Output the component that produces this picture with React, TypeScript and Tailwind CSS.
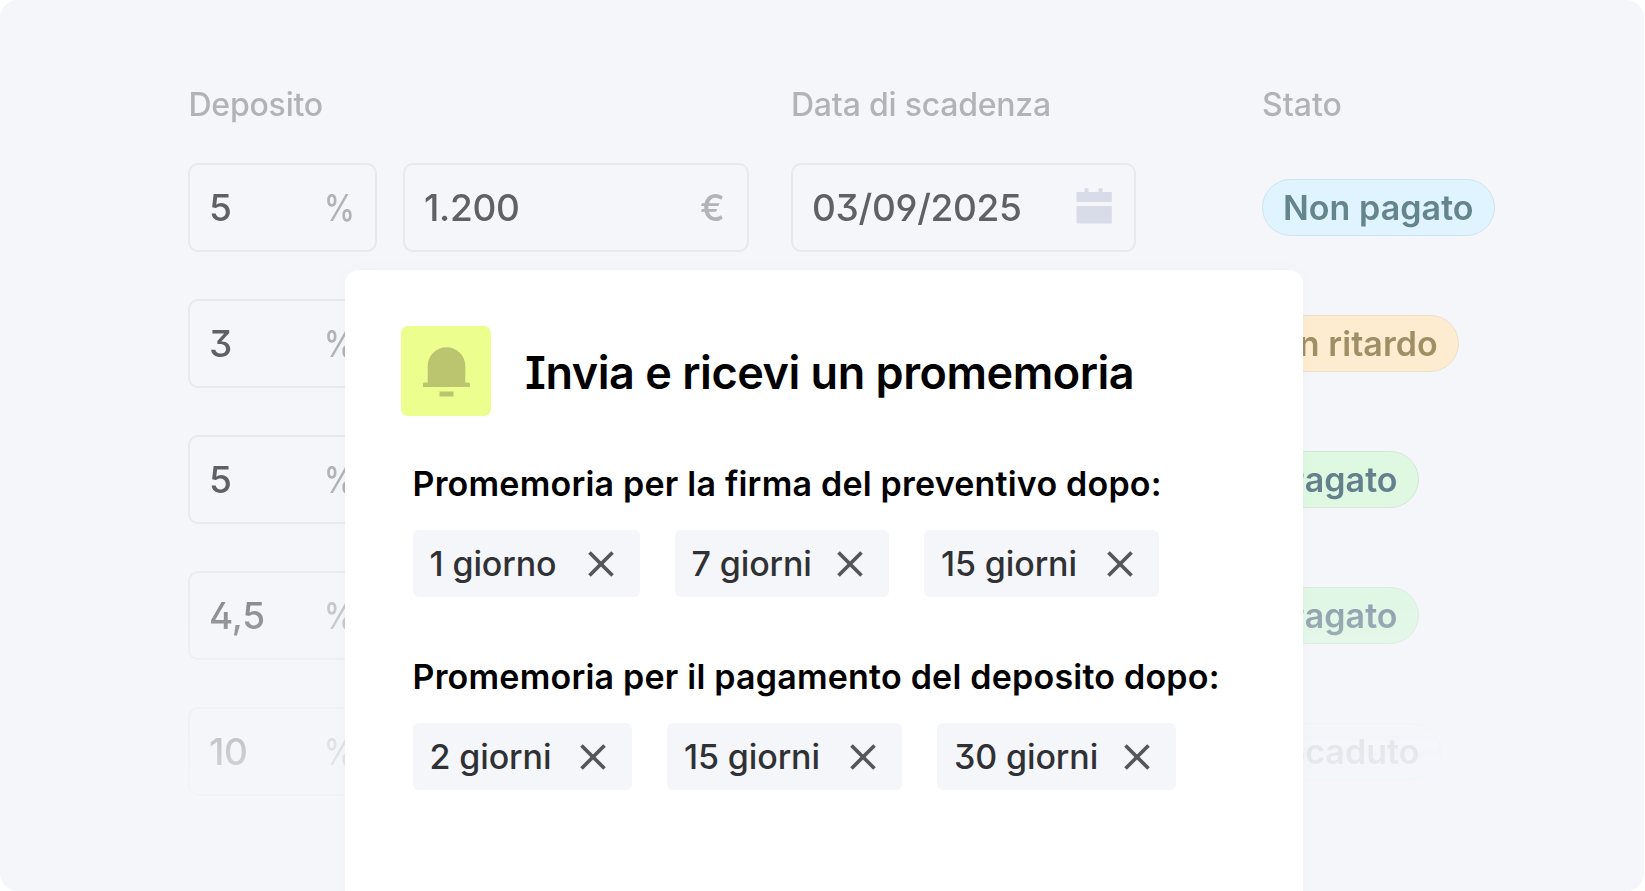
import { X } from "lucide-react";

type Row = {
  percent: string;
  amount?: string;
  due?: string;
  status: string;
  badge: string;
};

const rows: Row[] = [
  { percent: "5", amount: "1.200", due: "03/09/2025", status: "Non pagato", badge: "bg-[#dff4fe] border-[#cfe3ec] text-[#64858e]" },
  { percent: "3", status: "In ritardo", badge: "bg-[#fdecd0] border-[#ecdfca] text-[#a08f64]" },
  { percent: "5", status: "Pagato", badge: "bg-[#dff8e2] border-[#d3e6d8] text-[#64808c]" },
  { percent: "4,5", status: "Pagato", badge: "bg-[#d9f7dd] border-[#d3e6d8] text-[#64808c]" },
  { percent: "10", status: "Scaduto", badge: "bg-[#f4f6fa] border-[#eceef1] text-[#c2c4c9]" },
];

const reminders = [
  {
    label: "Promemoria per la firma del preventivo dopo:",
    chips: [
      { text: "1 giorno", width: "w-[227px]" },
      { text: "7 giorni", width: "w-[214.5px]" },
      { text: "15 giorni", width: "w-[235px]" },
    ],
  },
  {
    label: "Promemoria per il pagamento del deposito dopo:",
    chips: [
      { text: "2 giorni", width: "w-[219.5px]" },
      { text: "15 giorni", width: "w-[235px]" },
      { text: "30 giorni", width: "w-[239px]" },
    ],
  },
];

function CalendarIcon() {
  return (
    <svg className="mb-[4px]" width="36" height="36" viewBox="0 0 36 36" fill="#d8dce8">
      <path d="M.5 4h8V.300h4V4h10V.300h4V4h9.300v10H.5zM.5 18h35.300v17.500H.5z" />
    </svg>
  );
}

function BellIcon() {
  return (
    <svg className="mt-[2px]" width="48" height="50" viewBox="0 0 48 50" fill="#bbc46e">
      <path d="M5.700 35.500V19a18.800 18.800 0 0 1 37.600 0v16.500h3.200a1.400 1.400 0 0 1 1.400 1.400v3.200H1v-3.200a1.400 1.400 0 0 1 1.400-1.400zM17.500 44.500h14v5h-14z" />
    </svg>
  );
}

function Field({ value, unit, className }: { value: string; unit: React.ReactNode; className: string }) {
  return (
    <div className={`flex h-[89px] items-center justify-between rounded-[10px] border-2 border-[#e8e9ed] pl-[19px] text-[37px] text-[#606164] ${className}`}>
      <span className="font-medium tracking-[-0.3px]">{value}</span>
      {unit}
    </div>
  );
}

function Chip({ text, width }: { text: string; width: string }) {
  return (
    <div className={`flex h-[67px] items-center justify-between rounded-[6px] bg-[#f4f6fa] pr-[16px] pl-[17px] text-[34px] text-[#303134] ${width}`}>
      <span className="font-medium tracking-[-0.12px]">{text}</span>
      <X size={46} strokeWidth={1.9} color="#55565a" strokeLinecap="butt" />
    </div>
  );
}

export default function App() {
  return (
    <div className="relative h-[891px] w-[1645px] overflow-hidden bg-white font-['Inter',sans-serif] leading-[40px] [font-feature-settings:'cv08','cv09','cv02','cv03','cv04']">
      <div className="h-[891px] w-[1644px] rounded-[18px] bg-[#f4f6fa] pt-[85px] pl-[188px]">
        <div className="h-[806px] [mask-image:linear-gradient(to_bottom,black_414px,transparent_770px)]">
          <div className="mb-[38px] flex h-[40px] text-[32px] font-medium tracking-[-0.22px] text-[#b2b3b6]">
            <span className="w-[603px] pl-[0.5px]">Deposito</span>
            <span className="w-[471px]">Data di scadenza</span>
            <span className="tracking-normal">Stato</span>
          </div>
          <div className="flex flex-col gap-[47px]">
            {rows.map((row, i) => (
              <div key={i} className="flex items-center">
                <Field
                  value={row.percent}
                  unit={<span className="origin-right scale-x-[0.84] font-medium text-[#b2b3b6]">%</span>}
                  className="mr-[26px] w-[189px] pr-[20px]"
                />
                <div className="flex w-[859px] gap-[42px]">
                  {row.amount && (
                    <Field value={row.amount} unit={<span className="font-medium text-[#b2b3b6]">€</span>} className="w-[346px] pr-[22px]" />
                  )}
                  {row.due && <Field value={row.due} unit={<CalendarIcon />} className="w-[345px] pr-[22px]" />}
                </div>
                <div className={`flex h-[57px] items-center rounded-full border pr-[20.5px] pl-[20px] text-[34px] font-semibold tracking-[0.05px] ${row.badge}`}>
                  {row.status}
                </div>
              </div>
            ))}
          </div>
        </div>
      </div>

      {/* reminder dialog, runs off the bottom edge */}
      <div className="absolute top-[270px] left-[345px] h-[640px] w-[958px] rounded-t-[14px] bg-white pt-[56px] pl-[56px] shadow-[0_0_20px_rgba(0,0,0,0.02)]">
        <div className="flex items-center gap-[34px]">
          <div className="flex h-[90px] w-[90px] items-center justify-center rounded-[7px] bg-[#ebfe8e]">
            <BellIcon />
          </div>
          <h2 className="pt-[3px] text-[45px] font-semibold tracking-[-0.47px] text-black">Invia e ricevi un promemoria</h2>
        </div>
        {reminders.map((group, i) => (
          <div key={group.label} className={i === 0 ? "mt-[48px] pl-[11.5px]" : "mt-[60px] pl-[11.5px]"}>
            <p className="text-[34px] font-semibold tracking-[0.21px] text-black">{group.label}</p>
            <div className="mt-[26px] flex gap-[35px]">
              {group.chips.map((chip) => (
                <Chip key={chip.text} text={chip.text} width={chip.width} />
              ))}
            </div>
          </div>
        ))}
      </div>
    </div>
  );
}
